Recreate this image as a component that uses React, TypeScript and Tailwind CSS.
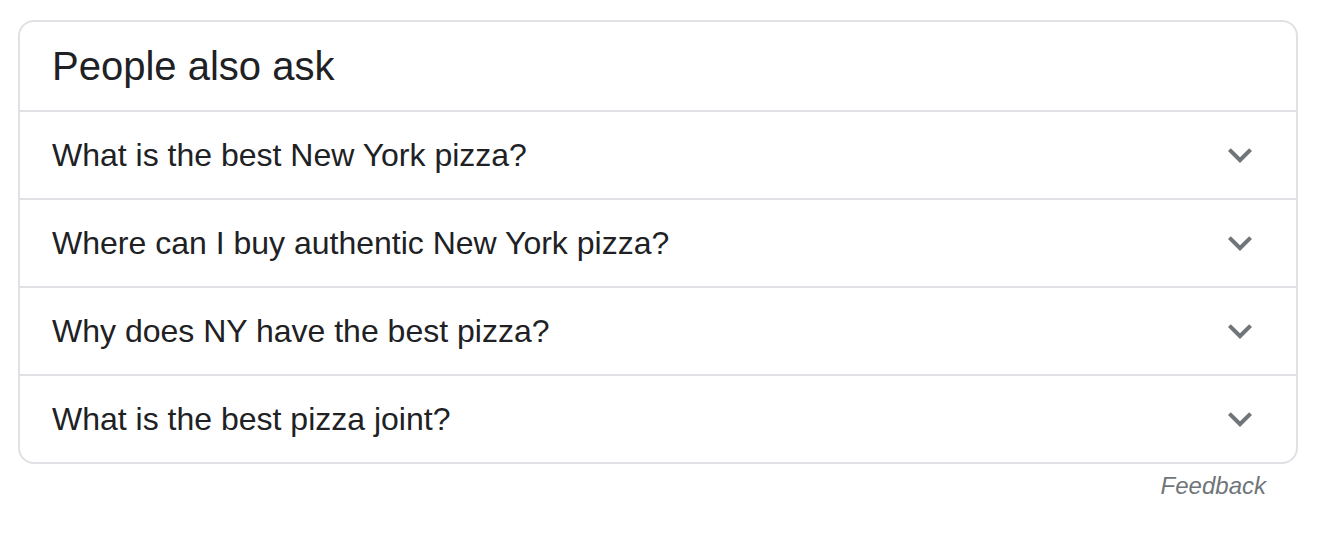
const questions = [
  'What is the best New York pizza?',
  'Where can I buy authentic New York pizza?',
  'Why does NY have the best pizza?',
  'What is the best pizza joint?',
];

function ExpandMore() {
  return (
    <svg width="48" height="48" viewBox="0 0 24 24" fill="#70757a">
      <path d="M16.59 8.59L12 13.17 7.41 8.59 6 10l6 6 6-6z" />
    </svg>
  );
}

export default function App() {
  return (
    <div
      className="min-h-[556px] bg-white pl-[18px] pt-[20px] text-[#202124]"
      style={{ fontFamily: '"Liberation Sans", Arial, sans-serif' }}
    >
      <div className="w-[1280px]">
        <div className="rounded-[16px] border-2 border-[#dfe1e5]">
          {/* 見出し */}
          <div className="flex h-[88px] items-center pl-[32px]">
            <h2 className="text-[40px] leading-[48px]">People also ask</h2>
          </div>

          {/* 質問リスト */}
          {questions.map((q, i) => (
            <div
              key={i}
              className="flex h-[88px] items-center justify-between border-t-2 border-[#dfe1e5] pl-[32px] pr-[32px]"
            >
              <span className="text-[32px] leading-[40px]">{q}</span>
              <ExpandMore />
            </div>
          ))}
        </div>

        <div className="flex justify-end pr-[32px] pt-[6px]">
          <span className="text-[24px] italic leading-[32px] text-[#70757a]">
            Feedback
          </span>
        </div>
      </div>
    </div>
  );
}
